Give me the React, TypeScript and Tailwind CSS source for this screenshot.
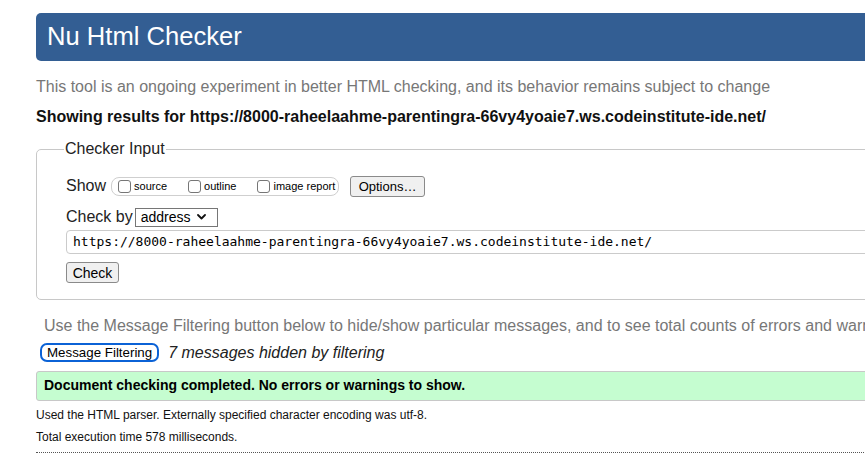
import React from "react";

/**
 * Small mac-style checkbox with label
 */
function Check({ label }: { label: string }) {
  return (
    <label className="flex items-center">
      <span className="w-[13px] h-[13px] border border-[#767676] rounded-[3px] bg-white" />
      <span className="text-[11px] ml-[3px] text-black">{label}</span>
    </label>
  );
}

/**
 * Checker input fieldset
 */
function CheckerInput() {
  return (
    <fieldset className="mt-[14px] border border-[#c8c8c8] rounded-[5px] pl-[29px] pt-[17px] pb-[14px] min-w-0">
      <legend className="ml-[-2px] px-[1px] text-[16px] leading-[18px] text-[#222]">Checker Input</legend>

      <div className="flex items-center h-[22px]">
        <span className="text-[16px] text-[#222]">Show</span>
        <div className="ml-[5px] flex items-center h-[19px] w-[228px] border border-[#cfcfcf] rounded-[8px] pl-[6px]">
          <Check label="source" />
          <span className="w-[21px]" />
          <Check label="outline" />
          <span className="w-[21px]" />
          <Check label="image report" />
        </div>
        <button className="ml-[11px] h-[21px] w-[75px] border border-[#8a8a8a] rounded-[3px] bg-[#f0f0f0] text-[13px] text-black leading-none">
          Options…
        </button>
      </div>

      <div className="flex items-center mt-[10px] h-[20px]">
        <span className="text-[16px] text-[#222]">Check by</span>
        <div className="ml-[2px] flex items-center justify-between h-[19px] w-[83px] border border-[#767676] bg-white pl-[5px] pr-[11px]">
          <span className="text-[14px] text-black leading-none">address</span>
          <svg width="9" height="6" viewBox="0 0 9 6" fill="none" stroke="#111" strokeWidth="1.8" strokeLinecap="round" strokeLinejoin="round">
            <path d="M1 1l3.5 3.5L8 1" />
          </svg>
        </div>
      </div>

      <div className="mt-[3px] h-[24px] border border-[#cbcbcb] rounded-[4px] flex items-center pl-[6px]">
        <span className="text-[13px] text-black font-['DejaVu_Sans_Mono',monospace] whitespace-nowrap">
          https://8000-raheelaahme-parentingra-66vy4yoaie7.ws.codeinstitute-ide.net/
        </span>
      </div>

      <button className="mt-[8px] h-[21px] w-[53px] border border-[#8a8a8a] rounded-[3px] bg-[#f0f0f0] text-[14px] text-black leading-none">
        Check
      </button>
    </fieldset>
  );
}

export default function App() {
  return (
    <div className="w-[865px] h-[476px] overflow-hidden bg-white font-['Liberation_Sans',Arial,sans-serif]">
      <div className="w-[1100px] pl-[36px] pt-[13px]">
        <header className="h-[48px] bg-[#335e93] rounded-[5px] flex items-center pl-[11px]">
          <h1 className="text-[25.6px] text-white leading-none">Nu Html Checker</h1>
        </header>

        <p className="mt-[17px] text-[16px] leading-[18px] text-[#777]">
          This tool is an ongoing experiment in better HTML checking, and its behavior remains subject to change
        </p>
        <p className="mt-[12px] text-[16px] leading-[18px] font-bold text-[#111]">
          Showing results for https://8000-raheelaahme-parentingra-66vy4yoaie7.ws.codeinstitute-ide.net/
        </p>

        <CheckerInput />

        <p className="mt-[17px] ml-[8px] text-[16px] leading-[18px] text-[#777] whitespace-nowrap">
          Use the Message Filtering button below to hide/show particular messages, and to see total counts of errors and warnings.
        </p>

        <div className="mt-[6px] flex items-center">
          <button className="ml-[4px] h-[19px] px-[5px] border-2 border-[#0b62d6] rounded-[7px] bg-white text-[13.33px] text-black leading-none">
            Message Filtering
          </button>
          <span className="ml-[9px] text-[16px] italic text-[#222]">7 messages hidden by filtering</span>
        </div>

        <div className="mt-[6px] h-[30px] bg-[#c5fdd0] border border-[#c8c8c8] rounded-[3px] flex items-center pl-[7px]">
          <span className="text-[14px] font-bold text-black">Document checking completed. No errors or warnings to show.</span>
        </div>

        <p className="mt-[7px] text-[12px] leading-[14px] text-[#111]">
          Used the HTML parser. Externally specified character encoding was utf-8.
        </p>
        <p className="mt-[8px] text-[12px] leading-[14px] text-[#111]">Total execution time 578 milliseconds.</p>
        <div className="mt-[8px] border-b border-dotted border-[#555]" />
      </div>
    </div>
  );
}
